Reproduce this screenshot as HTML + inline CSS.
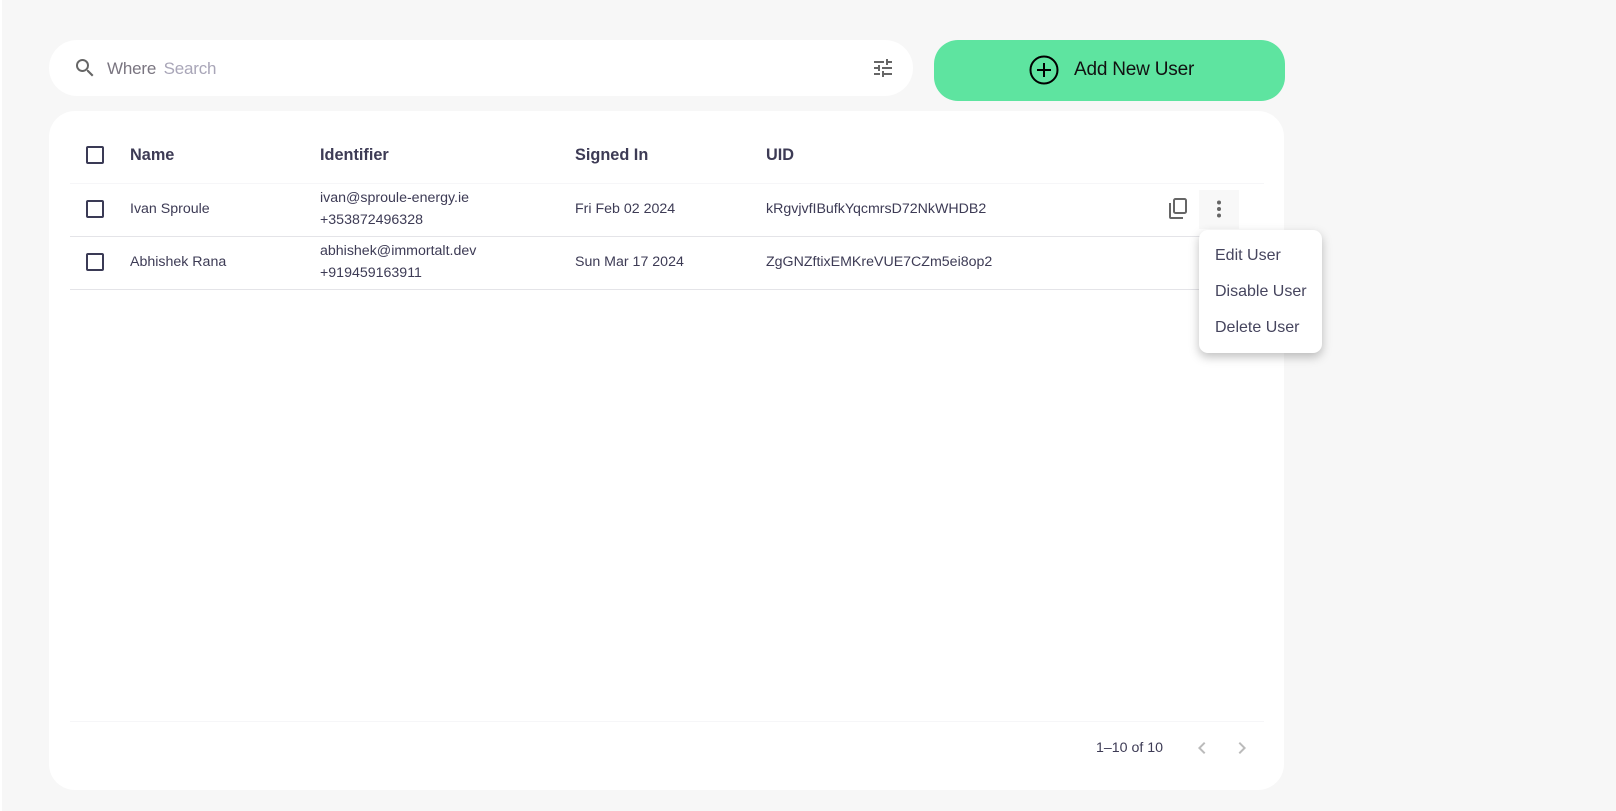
<!DOCTYPE html>
<html><head><style>
*{box-sizing:border-box;margin:0;padding:0}
body{width:1616px;height:811px;background:#f7f7f7;font-family:"Liberation Sans",sans-serif;color:#3d3b55;position:relative;overflow:hidden}
.a{position:absolute}
.search{left:49px;top:40px;width:864px;height:56px;background:#fff;border-radius:28px}
.btn{left:934px;top:40px;width:351px;height:61px;background:#5ee4a0;border-radius:24px}
.card{left:49px;top:111px;width:1235px;height:679px;background:#fff;border-radius:26px}
.cb{width:18px;height:18px;border:2px solid #3a3a55;border-radius:2px}
.h{font-weight:bold;font-size:16.3px;top:146px}
.t{font-size:14.2px;line-height:22px}
.line{height:1px;background:#e4e4e8}
.menu{left:1199px;top:230px;width:123px;height:123px;background:#fff;border-radius:9px;box-shadow:0 4px 10px rgba(0,0,0,.25)}
.mi{font-size:16px;left:1215px;color:#46455e}
</style></head><body>
<div class="a" style="left:0;top:0;width:2px;height:811px;background:#fff"></div>
<div class="a search"></div>
<svg class="a" style="left:73px;top:56px" width="24" height="24" viewBox="0 0 24 24"><path fill="#666" d="M15.5 14h-.79l-.28-.27A6.47 6.47 0 0016 9.5 6.5 6.5 0 109.5 16c1.61 0 3.09-.59 4.23-1.57l.27.28v.79l5 4.99L20.49 19l-4.99-5zm-6 0C7.01 14 5 11.99 5 9.5S7.01 5 9.5 5 14 7.01 14 9.5 11.99 14 9.5 14z"/></svg>
<div class="a" style="left:107px;top:59px;font-size:17px;color:#7a7580;letter-spacing:-0.2px">Where <span style="color:#a9a6b8;margin-left:3px">Search</span></div>
<svg class="a" style="left:871px;top:56px" width="24" height="24" viewBox="0 0 24 24"><path fill="#666" d="M3 17v2h6v-2H3zM3 5v2h10V5H3zm10 16v-2h8v-2h-8v-2h-2v6h2zM7 9v2H3v2h4v2h2V9H7zm14 4v-2H11v2h10zm-6-4h2V7h4V5h-4V3h-2v6z"/></svg>
<div class="a btn"></div>
<svg class="a" style="left:1028px;top:54px" width="32" height="32" viewBox="0 0 32 32"><circle cx="16" cy="16" r="13.5" fill="none" stroke="#000" stroke-width="2"/><path d="M16 9v14M9 16h14" stroke="#000" stroke-width="2"/></svg>
<div class="a" style="left:1074px;top:59px;font-size:19px;color:#111;letter-spacing:-0.2px">Add New User</div>
<div class="a card"></div>
<div class="a cb" style="left:86px;top:146px"></div>
<div class="a h" style="left:130px">Name</div>
<div class="a h" style="left:320px">Identifier</div>
<div class="a h" style="left:575px">Signed In</div>
<div class="a h" style="left:766px">UID</div>
<div class="a line" style="left:70px;top:183px;width:1194px;background:#f6f6f8"></div>
<div class="a" style="left:1199px;top:190px;width:40px;height:39px;background:#f8f8f8"></div>
<div class="a cb" style="left:86px;top:200px"></div>
<div class="a t" style="left:130px;top:198px">Ivan Sproule</div>
<div class="a t" style="left:320px;top:187px">ivan@sproule-energy.ie<br>+353872496328</div>
<div class="a t" style="left:575px;top:198px">Fri Feb 02 2024</div>
<div class="a t" style="left:766px;top:198px">kRgvjvfIBufkYqcmrsD72NkWHDB2</div>
<svg class="a" style="left:1166px;top:197px" width="24" height="24" viewBox="0 0 24 24"><rect x="8" y="2" width="12" height="14" rx="1.5" fill="none" stroke="#666" stroke-width="2"/><path d="M4 6v14a1 1 0 001 1h12" fill="none" stroke="#666" stroke-width="2"/></svg>
<svg class="a" style="left:1207px;top:197px" width="24" height="24" viewBox="0 0 24 24"><circle cx="12" cy="5.5" r="2" fill="#666"/><circle cx="12" cy="12" r="2" fill="#666"/><circle cx="12" cy="18.5" r="2" fill="#666"/></svg>
<div class="a line" style="left:70px;top:236px;width:1130px"></div>
<div class="a cb" style="left:86px;top:253px"></div>
<div class="a t" style="left:130px;top:251px">Abhishek Rana</div>
<div class="a t" style="left:320px;top:240px">abhishek@immortalt.dev<br>+919459163911</div>
<div class="a t" style="left:575px;top:251px">Sun Mar 17 2024</div>
<div class="a t" style="left:766px;top:251px">ZgGNZftixEMKreVUE7CZm5ei8op2</div>
<div class="a line" style="left:70px;top:289px;width:1130px"></div>
<div class="a menu"></div>
<div class="a mi" style="top:247px">Edit User</div>
<div class="a mi" style="top:283px">Disable User</div>
<div class="a mi" style="top:319px">Delete User</div>
<div class="a line" style="left:70px;top:721px;width:1194px;background:#f6f6f8"></div>
<div class="a" style="left:1096px;top:740px;font-size:14.2px">1–10 of 10</div>
<svg class="a" style="left:1190px;top:736px" width="24" height="24" viewBox="0 0 24 24"><path fill="#bbb" d="M15.41 7.41L14 6l-6 6 6 6 1.41-1.41L10.83 12z"/></svg>
<svg class="a" style="left:1230px;top:736px" width="24" height="24" viewBox="0 0 24 24"><path fill="#bbb" d="M10 6L8.59 7.41 13.17 12l-4.58 4.59L10 18l6-6z"/></svg>
</body></html>
